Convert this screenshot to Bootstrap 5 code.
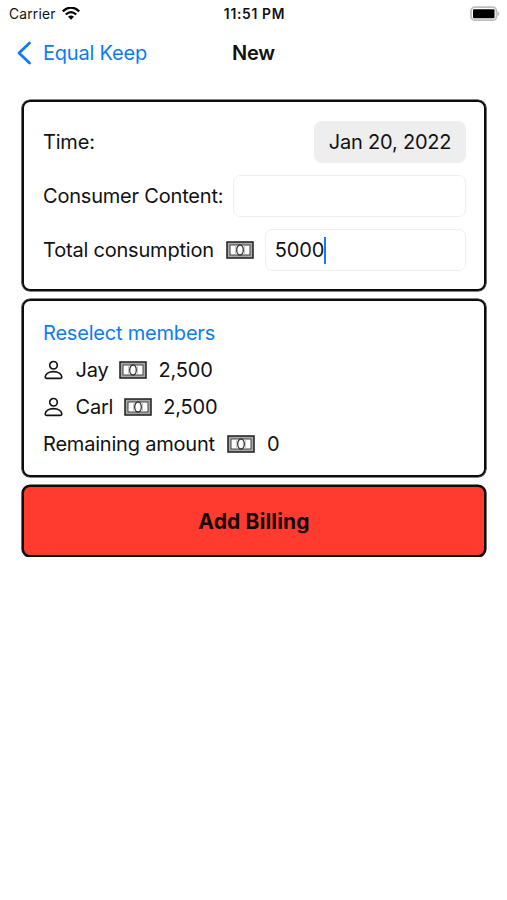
<!DOCTYPE html>
<html lang="en">
<head>
<meta charset="utf-8">
<meta name="viewport" content="width=device-width, initial-scale=1">
<title>New billing</title>
<link rel="stylesheet" href="https://cdn.jsdelivr.net/npm/bootstrap@5.3.0/dist/css/bootstrap.min.css">
<style>
body{font-family:Inter,"Liberation Sans",sans-serif;font-size:20px;line-height:28px;letter-spacing:-.2px;color:#111;background:#fff;overflow:hidden}
svg{display:block;flex:none}
.status-bar{height:27px;font-size:13.8px;line-height:27px;letter-spacing:.2px;padding:1px 7px 0 9px}
.status-time{font-weight:600;font-size:13.8px;letter-spacing:.7px}
.title-bar{height:50px;padding:1px 17px 0}
.title-bar a,.reselect{color:#0a7cf5}
.back-link{height:28px;gap:11px}
.side{flex:1 1 0}
.content{padding:23px 21px 0 22px;gap:8px}
.panel{border:2px solid #0c0c0c;box-shadow:0 0 0 .6px #0c0c0c;border-radius:8px}
.form-panel{height:191px;padding:19px 18px 0 19px;gap:12px}
.form-panel>div{height:42px}
.members-panel{height:178px;padding:18px 19px 0;gap:9px}
.members-panel>*{height:28px}
.date-pill{width:152px;height:42px;border-radius:8px;background:#eee;color:#111}
.field{height:42px;border:1px solid #efefef;border-radius:7px;padding:0 9px}
.field-gap{margin-left:10px}
.money{margin:0 11.5px 0 12.5px}
.member .money{margin-left:10.5px}
.money-field{margin-right:10.5px}
.person{margin:0 12.5px 0 1px}
.caret{width:2.4px;height:27px;background:#147cf5}
.add-button{height:72px;background:#ff3b30;color:#150403;font-weight:700;font-size:21px;letter-spacing:.15px;padding-top:2px}
</style>
<script src="https://cdn.jsdelivr.net/npm/bootstrap@5.3.0/dist/js/bootstrap.bundle.min.js"></script>
</head>
<body>
<svg width="0" height="0" class="d-none">
  <symbol id="note" viewBox="0 0 28 18">
    <rect x="1" y="1" width="26" height="16" fill="#aaa" stroke="#1c1c1c" stroke-width="1.500"/>
    <rect x="4" y="4" width="20" height="10" fill="#fff" stroke="#444" stroke-width="1"/>
    <path d="M9.500 4.500v9M18.500 4.500v9" stroke="#bbb" stroke-width=".8"/>
    <ellipse cx="14" cy="9" rx="3.300" ry="5" fill="#fff" stroke="#333" stroke-width="1.300"/>
  </symbol>
  <symbol id="person" viewBox="0 0 20 20">
    <circle cx="10" cy="5" r="4" fill="none" stroke="#111" stroke-width="1.700"/>
    <path d="M2.700 18.800h14.600q1.500 0 1.500-1.400C18.500 14 15 11.700 10 11.700S1.500 14 1.200 17.400q0 1.400 1.500 1.400z" fill="none" stroke="#111" stroke-width="1.700"/>
  </symbol>
</svg>

<header>
  <div class="status-bar d-flex align-items-center">
    <div class="side d-flex align-items-center">
      <span>Carrier</span>
      <svg class="ms-1" width="20" height="14" viewBox="-2 .8 20 14" fill="none" stroke="#000" stroke-width="2.300"><path d="M.8 5.200Q9-2.300 17.200 5.200M3.800 8.300Q9 3.500 14.200 8.300"/><path d="M6 10.500Q9 8 12 10.500L9 13.500z" fill="#000" stroke="none"/></svg>
    </div>
    <span class="status-time">11:51 PM</span>
    <div class="side d-flex justify-content-end">
      <svg width="30" height="15" viewBox="0 .8 30 15" overflow="visible"><rect x="1" y="1" width="25.500" height="13" rx="4" fill="#fff" stroke="#bdbdbd" stroke-width="1.800"/><rect x="3" y="3" width="21.500" height="9" rx="1"/><path d="M27.500 5q2 .6 2 2.500t-2 2.500z" fill="#bdbdbd"/></svg>
    </div>
  </div>
  <nav class="title-bar d-flex align-items-center">
    <div class="side d-flex"><a href="#" class="back-link d-flex align-items-center text-decoration-none"><svg width="15" height="24" viewBox="0 0 15 24" fill="none" stroke="currentColor" stroke-width="2.800" stroke-linecap="round" stroke-linejoin="round"><path d="M12.500 2 2 12l10.500 10"/></svg><span>Equal Keep</span></a></div>
    <span class="fw-semibold">New</span>
    <div class="side"></div>
  </nav>
</header>

<main class="content d-flex flex-column">
  <section class="panel form-panel d-flex flex-column">
    <div class="d-flex align-items-center justify-content-between"><span>Time:</span><span class="date-pill d-flex align-items-center justify-content-center">Jan 20, 2022</span></div>
    <div class="d-flex align-items-center"><span class="text-nowrap">Consumer Content:</span><span class="field field-gap flex-fill"></span></div>
    <div class="d-flex align-items-center"><span class="text-nowrap">Total consumption</span><svg class="money money-field" width="28" height="18"><use href="#note"/></svg><span class="field flex-fill d-flex align-items-center"><span>5000</span><span class="caret"></span></span></div>
  </section>
  <section class="panel members-panel d-flex flex-column">
    <a href="#" class="reselect text-decoration-none">Reselect members</a>
    <div class="member d-flex align-items-center"><svg class="person" width="19" height="20"><use href="#person"/></svg><span>Jay</span><svg class="money" width="28" height="18"><use href="#note"/></svg><span>2,500</span></div>
    <div class="member d-flex align-items-center"><svg class="person" width="19" height="20"><use href="#person"/></svg><span>Carl</span><svg class="money" width="28" height="18"><use href="#note"/></svg><span>2,500</span></div>
    <div class="d-flex align-items-center"><span>Remaining amount</span><svg class="money" width="28" height="18"><use href="#note"/></svg><span>0</span></div>
  </section>
  <button class="panel add-button w-100" type="button">Add Billing</button>
</main>
</body>
</html>
